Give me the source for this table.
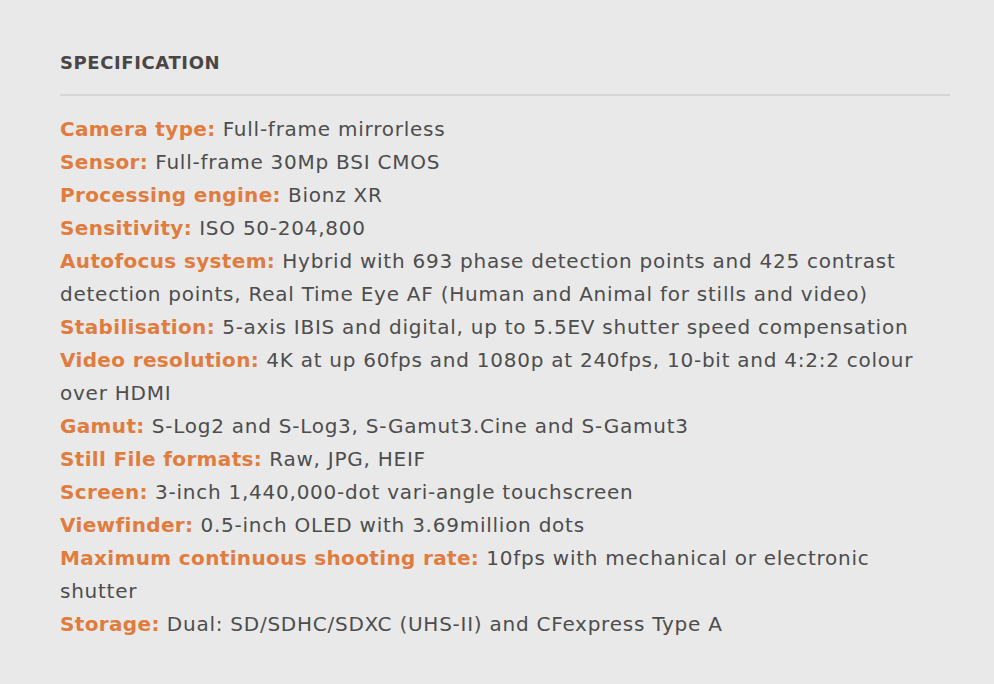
const specs: [string, string][] = [
  ["Camera type:", "Full-frame mirrorless"],
  ["Sensor:", "Full-frame 30Mp BSI CMOS"],
  ["Processing engine:", "Bionz XR"],
  ["Sensitivity:", "ISO 50-204,800"],
  [
    "Autofocus system:",
    "Hybrid with 693 phase detection points and 425 contrast detection points, Real Time Eye AF (Human and Animal for stills and video)",
  ],
  ["Stabilisation:", "5-axis IBIS and digital, up to 5.5EV shutter speed compensation"],
  ["Video resolution:", "4K at up 60fps and 1080p at 240fps, 10-bit and 4:2:2 colour over HDMI"],
  ["Gamut:", "S-Log2 and S-Log3, S-Gamut3.Cine and S-Gamut3"],
  ["Still File formats:", "Raw, JPG, HEIF"],
  ["Screen:", "3-inch 1,440,000-dot vari-angle touchscreen"],
  ["Viewfinder:", "0.5-inch OLED with 3.69million dots"],
  ["Maximum continuous shooting rate:", "10fps with mechanical or electronic shutter"],
  ["Storage:", "Dual: SD/SDHC/SDXC (UHS-II) and CFexpress Type A"],
];

export default function App() {
  return (
    <div className="w-full min-h-screen bg-[#e9e9e9] font-['DejaVu_Sans',sans-serif] pt-[50px] px-[60px]">
      <div className="w-[890px]">
        <h2 className="text-[18px] font-bold text-[#4a4646] leading-[26px] tracking-[0.6px]">SPECIFICATION</h2>
        <div className="h-[2px] bg-[#d6d6d6] mt-[18px] mb-[17px]" />
        <div className="text-[20px] leading-[33px] text-[#4d4d4d] tracking-[0.75px]">
          {specs.map(([label, value]) => (
            <p key={label}>
              <span className="font-bold text-[#e07c3e] tracking-[0.35px]">{label}</span> {value}
            </p>
          ))}
        </div>
      </div>
    </div>
  );
}
